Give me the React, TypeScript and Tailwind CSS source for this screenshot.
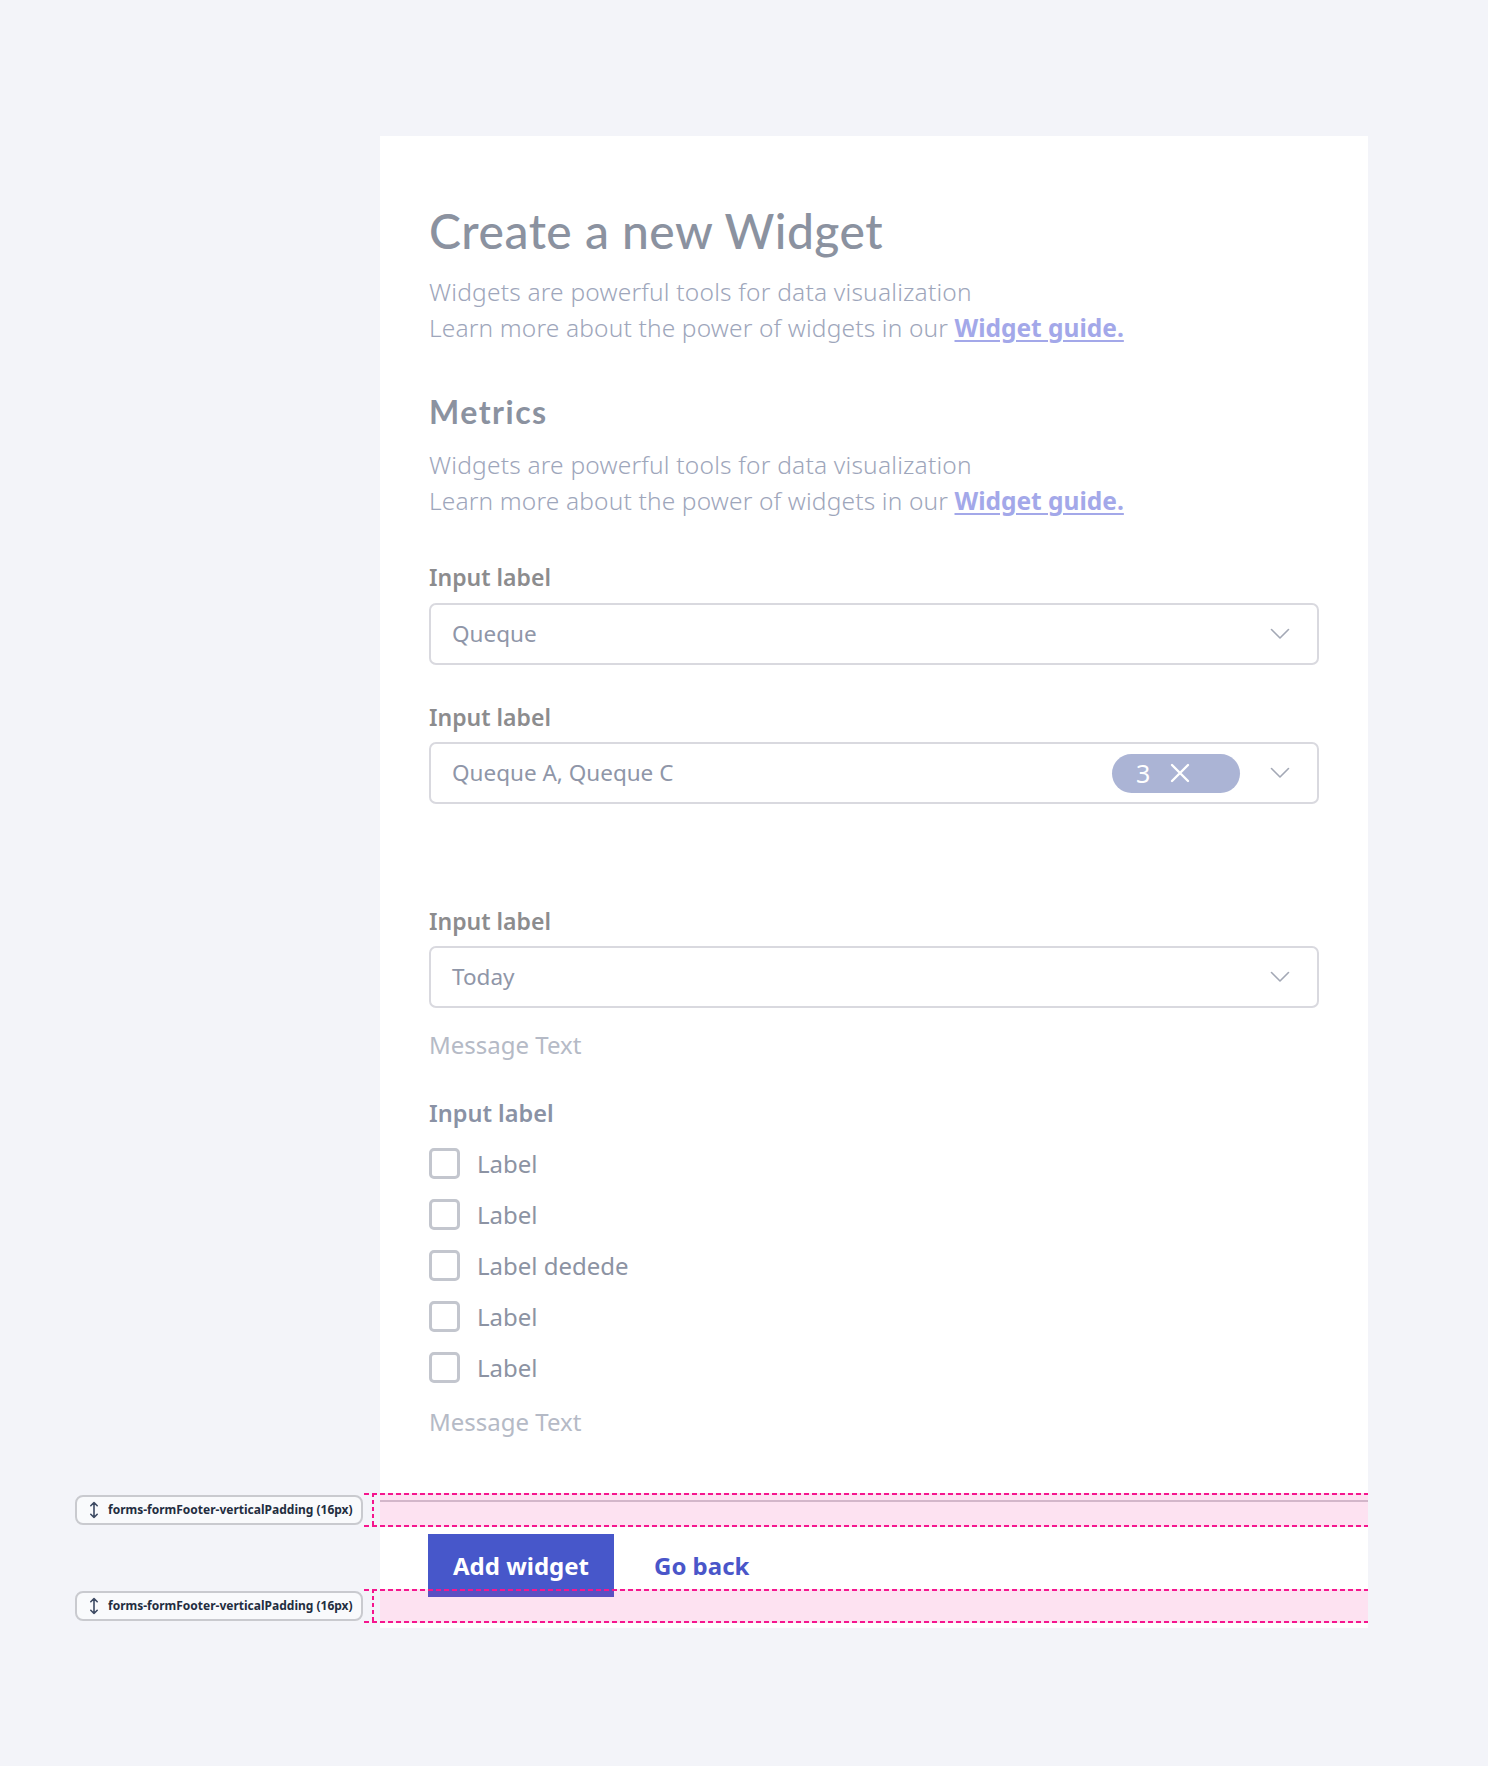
import React from "react";

const body = { fontFamily: '"Noto Sans", "Open Sans", sans-serif' };
const head = { fontFamily: 'Lato, "Noto Sans", sans-serif' };

function Chevron() {
  return (
    <svg width="20" height="12" viewBox="0 0 20 12" fill="none">
      <path d="M1.5 1.5 L10 10 L18.5 1.5" stroke="#a3a8b5" strokeWidth="1.6" strokeLinecap="round" strokeLinejoin="round" />
    </svg>
  );
}

function Select({ value, badge }: { value: string; badge?: boolean }) {
  return (
    <div className="h-[62px] w-full border-2 border-[#d9d9df] rounded-[7px] flex items-center pl-[21px] pr-[27px]">
      <span className="flex-1 text-[22.5px] text-[#8f96a8]">{value}</span>
      {badge && (
        <div className="w-[128px] h-[39px] rounded-full bg-[#abb4d5] flex items-center pl-[24px] gap-[20px] mr-[30px]">
          <span className="text-[25px] text-white leading-none">3</span>
          <svg width="20" height="20" viewBox="0 0 20 20">
            <path d="M2 2 L18 18 M18 2 L2 18" stroke="white" strokeWidth="2.4" strokeLinecap="round" />
          </svg>
        </div>
      )}
      <Chevron />
    </div>
  );
}

function Label({ children }: { children: React.ReactNode }) {
  return <div className="text-[23px] leading-[32px] font-semibold text-[#8c8c8e]">{children}</div>;
}

function Check({ label }: { label: string }) {
  return (
    <div className="h-[51px] flex items-center gap-[17px]">
      <div className="w-[31px] h-[31px] border-[3px] border-[#c3c6ce] rounded-[5px]" />
      <span className="text-[24px] text-[#8c93a3]">{label}</span>
    </div>
  );
}

function Intro() {
  return (
    <div className="text-[24.5px] leading-[36px] text-[#9ea6bb] font-light">
      <div className="tracking-[0.2px]">Widgets are powerful tools for data visualization</div>
      <div>
        <span className="tracking-[0.15px]">Learn more about the power of widgets in our</span>{" "}
        <a className="font-bold text-[#a3a8e9] underline underline-offset-[3px]">Widget guide.</a>
      </div>
    </div>
  );
}

function UpDown() {
  return (
    <svg width="10" height="18" viewBox="0 0 10 18" fill="none">
      <path d="M5 1.5 V16.5 M1.8 4.7 L5 1.5 L8.2 4.7 M1.8 13.3 L5 16.5 L8.2 13.3" stroke="#3d4a63" strokeWidth="1.6" strokeLinecap="round" strokeLinejoin="round" />
    </svg>
  );
}

function Band({ top }: { top: number }) {
  return (
    <div className="absolute left-[-16px] right-0 h-[34px]" style={{ top }}>
      <div className="absolute left-[16px] right-0 top-0 bottom-0 bg-[rgba(240,20,140,0.12)]" />
      <div className="absolute left-0 right-0 top-0 h-[2px] bg-[repeating-linear-gradient(90deg,#f5168e_0_5px,transparent_5px_8px)]" />
      <div className="absolute left-0 right-0 bottom-0 h-[2px] bg-[repeating-linear-gradient(90deg,#f5168e_0_5px,transparent_5px_8px)]" />
      <div className="absolute left-[8px] top-0 bottom-0 w-[2px] bg-[repeating-linear-gradient(180deg,#f5168e_0_4px,transparent_4px_7px)]" />
      <div className="absolute left-[-289px] top-[2px] w-[288px] h-[30px] rounded-[8px] border-2 border-[#c9cacf] bg-[#f9fafc] flex items-center pl-[12px] gap-[9px]" style={body}>
        <UpDown />
        <span className="text-[12px] font-bold text-[#232d40] whitespace-nowrap">forms-formFooter-verticalPadding (16px)</span>
      </div>
    </div>
  );
}

export default function App() {
  return (
    <div className="min-h-[1766px] bg-[#f3f4f9] pt-[136px] pb-[136px]" style={body}>
      <div className="ml-[380px] w-[988px] bg-white">
        <div className="px-[49px] pt-[67px]">
          <h1 className="text-[48px] leading-[56px] font-medium tracking-[0.5px] text-[#8b92a0]" style={head}>Create a new Widget</h1>
          <div className="mt-[15px]"><Intro /></div>
          <h2 className="mt-[46px] text-[32px] leading-[40px] font-bold tracking-[1.5px] text-[#8b92a0]" style={head}>Metrics</h2>
          <div className="mt-[15px]"><Intro /></div>

          <div className="mt-[42px]"><Label>Input label</Label></div>
          <div className="mt-[10px]"><Select value="Queque" /></div>

          <div className="mt-[36px]"><Label>Input label</Label></div>
          <div className="mt-[9px]"><Select value="Queque A, Queque C" badge /></div>

          <div className="mt-[101px]"><Label>Input label</Label></div>
          <div className="mt-[9px]"><Select value="Today" /></div>
          <div className="mt-[21px] text-[24px] leading-[32px] text-[#b5bac6]">Message Text</div>

          <div className="mt-[36px] text-[23.5px] leading-[32px] font-semibold text-[#8a92a5]">Input label</div>
          <div className="mt-[9px] flex flex-col">
            <Check label="Label" />
            <Check label="Label" />
            <Check label="Label dedede" />
            <Check label="Label" />
            <Check label="Label" />
          </div>
          <div className="mt-[13px] text-[24px] leading-[32px] text-[#b5bac6]">Message Text</div>
        </div>

        <div className="relative mt-[62px] border-t-2 border-[#d0cdd3] px-[48px] pt-[32px] pb-[31px] flex items-center gap-[40px]">
          <button className="h-[63px] w-[186px] bg-[#4757ca] text-white text-[24px] font-bold">Add widget</button>
          <a className="text-[24px] font-bold text-[#4a56c9]">Go back</a>
          <Band top={-9} />
          <Band top={87} />
        </div>
      </div>
    </div>
  );
}
